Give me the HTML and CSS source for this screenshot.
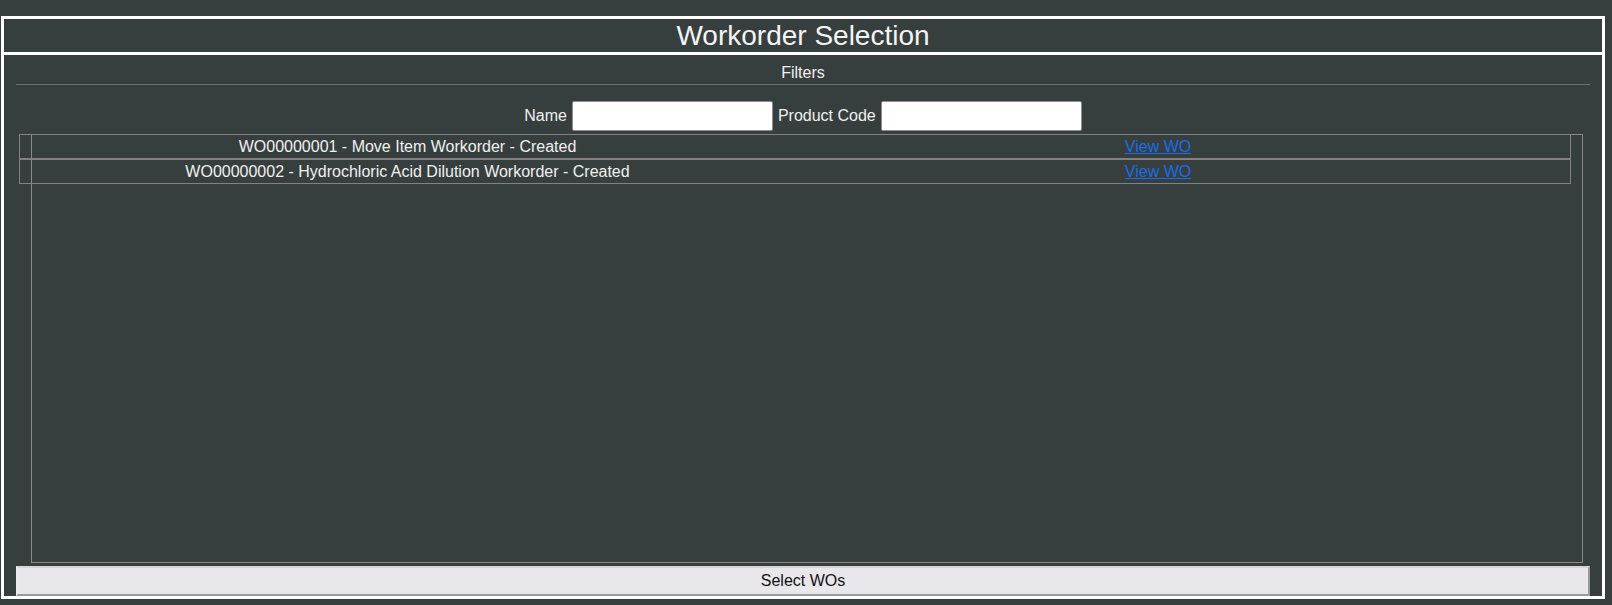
FILE: index.html
```html
<!DOCTYPE html>
<html lang="en">
<head>
<meta charset="utf-8">
<title>Workorder Selection</title>
<link rel="stylesheet" href="styles.css">
</head>
<body>
<div class="panel">
  <div class="panel-title">Workorder Selection</div>
  <div class="panel-body">
    <div class="filters-head">Filters</div>
    <div class="filters-row">
      <label class="filter-label" for="f-name">Name</label>
      <input class="filter-input" id="f-name" type="text">
      <label class="filter-label" for="f-code">Product Code</label>
      <input class="filter-input" id="f-code" type="text">
    </div>
    <div class="wo-list">
      <div class="wo-row">
        <span class="wo-name">WO00000001 - Move Item Workorder - Created</span>
        <span class="wo-link"><a href="#">View WO</a></span>
        <span class="wo-extra"></span>
      </div>
      <div class="wo-row">
        <span class="wo-name">WO00000002 - Hydrochloric Acid Dilution Workorder - Created</span>
        <span class="wo-link"><a href="#">View WO</a></span>
        <span class="wo-extra"></span>
      </div>
    </div>
    <button class="select-btn" type="button">Select WOs</button>
  </div>
</div>
</body>
</html>
```

FILE: styles.css
```css
html, body {
  margin: 0;
  padding: 0;
  background: #363f3e;
}

body {
  font-family: "Liberation Sans", Arial, sans-serif;
  font-size: 16px;
  color: #f0f0f0;
  padding: 16px 7px 0 1px;
}

.panel {
  box-sizing: border-box;
  height: 583px;
  border: 3px solid #ffffff;
  display: flex;
  flex-direction: column;
}

.panel-title {
  height: 32px;
  padding-top: 1px;
  line-height: 32px;
  font-size: 28px;
  text-align: center;
  color: #f4f4f4;
  border-bottom: 3px solid #ffffff;
}

.panel-body {
  flex: 1;
  display: flex;
  flex-direction: column;
  padding: 0 12px;
  min-height: 0;
}

.filters-head {
  padding-top: 7px;
  line-height: 22px;
  text-align: center;
  border-bottom: 1px solid #6c706f;
  color: #f0f0f0;
}

.filters-row {
  margin-top: 16px;
  display: flex;
  justify-content: center;
  align-items: center;
  gap: 5px;
  height: 30px;
}

.filter-label {
  line-height: 18px;
  color: #f0f0f0;
}

.filter-input {
  box-sizing: border-box;
  width: 201px;
  height: 30px;
  margin: 0;
  padding: 1px 4px;
  border: 1px solid #8f8f8f;
  border-radius: 2px;
  background: #ffffff;
  font-family: "Liberation Sans", Arial, sans-serif;
  font-size: 16px;
}

.wo-list {
  flex: 1;
  margin: 3px 7px 0 15px;
  border: 1px solid #8a8a8a;
  min-height: 0;
}

.wo-row {
  box-sizing: border-box;
  width: 1552px;
  margin-left: -13px;
  border: 1px solid #828282;
  display: grid;
  grid-template-columns: 775px 726px 1fr;
  line-height: 23px;
  text-align: center;
  color: #f0f0f0;
}

.wo-row:first-child {
  margin-top: -1px;
}

.wo-link a {
  color: #1a6de6;
  text-decoration: underline;
}

.select-btn {
  margin-top: 3px;
  height: 30px;
  box-sizing: border-box;
  border-style: solid;
  border-width: 2px;
  border-color: #d6d6d9 #9a9a9a #9a9a9a #ececef;
  background: #e8e7ec;
  color: #111111;
  font-family: "Liberation Sans", Arial, sans-serif;
  font-size: 16px;
  line-height: 18px;
  padding: 0;
  text-align: center;
}
```
